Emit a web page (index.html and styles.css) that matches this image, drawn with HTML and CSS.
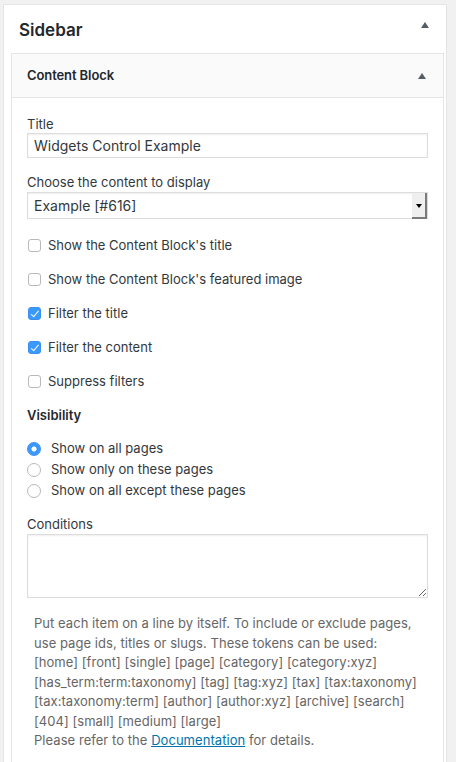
FILE: index.html
```html
<!DOCTYPE html>
<html lang="en">
<head>
<meta charset="utf-8">
<title>Sidebar widget</title>
<link rel="stylesheet" href="styles.css">
</head>
<body>
<div class="sidebar">
  <div class="sidebar-head">
    <h2 class="sidebar-name">Sidebar</h2>
    <span class="toggle-arrow"></span>
  </div>
  <div class="widget">
    <div class="widget-top">
      <h3 class="widget-title">Content Block</h3>
      <span class="toggle-arrow"></span>
    </div>
    <div class="widget-inside">
      <div class="field">
        <label class="field-label" for="w-title">Title</label>
        <input class="text-input" id="w-title" type="text" value="Widgets Control Example">
      </div>
      <div class="field">
        <label class="field-label" for="w-content">Choose the content to display</label>
        <div class="select-wrap">
          <select class="select-input" id="w-content">
            <option>Example [#616]</option>
          </select>
          <span class="select-btn"></span>
        </div>
      </div>
      <div class="checks">
        <label class="check-row"><input class="check" type="checkbox"><span>Show the Content Block's title</span></label>
        <label class="check-row"><input class="check" type="checkbox"><span>Show the Content Block's featured image</span></label>
        <label class="check-row"><input class="check" type="checkbox" checked><span>Filter the title</span></label>
        <label class="check-row"><input class="check" type="checkbox" checked><span>Filter the content</span></label>
        <label class="check-row"><input class="check" type="checkbox"><span>Suppress filters</span></label>
      </div>
      <div class="section-title">Visibility</div>
      <div class="radios">
        <label class="radio-row"><input class="radio" type="radio" name="vis" checked><span>Show on all pages</span></label>
        <label class="radio-row"><input class="radio" type="radio" name="vis"><span>Show only on these pages</span></label>
        <label class="radio-row"><input class="radio" type="radio" name="vis"><span>Show on all except these pages</span></label>
      </div>
      <div class="field conditions">
        <label class="field-label" for="w-cond">Conditions</label>
        <textarea class="text-area" id="w-cond"></textarea>
      </div>
      <p class="help">Put each item on a line by itself. To include or exclude pages,<br>use page ids, titles or slugs. These tokens can be used:<br>[home] [front] [single] [page] [category] [category:xyz]<br>[has_term:term:taxonomy] [tag] [tag:xyz] [tax] [tax:taxonomy]<br>[tax:taxonomy:term] [author] [author:xyz] [archive] [search]<br>[404] [small] [medium] [large]<br>Please refer to the <a class="doc-link" href="#">Documentation</a> for details.</p>
    </div>
  </div>
</div>
</body>
</html>
```
FILE: styles.css
```css
* { box-sizing: border-box; }
html, body { margin: 0; padding: 0; }
body {
  background: #f1f1f1;
  font-family: "Inter", "Liberation Sans", sans-serif;
  font-size: 13px;
  color: #23282d;
  overflow: hidden;
  height: 762px;
}
.sidebar {
  margin: 4px 9px 0 3px;
  background: #fff;
  border: 1px solid #e5e5e5;
  border-bottom: 0;
}
.sidebar-head {
  display: flex;
  justify-content: space-between;
  align-items: flex-start;
  padding: 12px 17px 10px 15px;
}
.sidebar-name {
  margin: 0;
  font-size: 17px;
  font-weight: 600;
  line-height: 26px;
}
.toggle-arrow {
  width: 0;
  height: 0;
  border-left: 4px solid transparent;
  border-right: 4px solid transparent;
  border-bottom: 6px solid #555d66;
}
.sidebar-head .toggle-arrow { margin-top: 5px; }
.widget {
  margin: 0 2px 0 7px;
  border: 1px solid #e5e5e5;
  border-bottom: 0;
  background: #fff;
}
.widget-top {
  display: flex;
  justify-content: space-between;
  align-items: center;
  height: 44px;
  padding: 0 17px 0 15px;
  background: #fafafa;
  border-bottom: 1px solid #e5e5e5;
}
.widget-title {
  margin: 0;
  font-size: 13px;
  font-weight: 600;
  line-height: 43px;
  letter-spacing: -0.1px;
}
.widget-inside {
  padding: 18px 15px 40px;
}
.field { margin: 0 0 16px; }
.field-label {
  display: block;
  line-height: 17px;
  color: #32373c;
}
.text-input, .select-input, .text-area {
  display: block;
  width: 100%;
  margin: 0;
  border: 1px solid #ddd;
  box-shadow: inset 0 1px 2px rgba(0,0,0,.07);
  background: #fff;
  color: #32373c;
  font-family: inherit;
  outline: none;
  border-radius: 0;
}
.text-input {
  height: 25px;
  padding: 0 6px;
  font-size: 14px;
}
.select-wrap {
  position: relative;
  margin-top: 1px;
}
.select-input {
  -webkit-appearance: none;
  appearance: none;
  height: 27px;
  padding: 0 6px;
  font-size: 14px;
}
.select-btn {
  position: absolute;
  top: 1px;
  right: 1px;
  bottom: 0;
  width: 15px;
  background: #efefef;
  box-shadow: inset -2px -2px 0 #7b7b7b;
  pointer-events: none;
}
.select-btn::after {
  content: "";
  position: absolute;
  left: 4px;
  top: 11px;
  border-left: 3.5px solid transparent;
  border-right: 3.5px solid transparent;
  border-top: 4px solid #000;
}
.checks {
  display: flex;
  flex-direction: column;
  gap: 14px;
}
.check-row, .radio-row {
  display: flex;
  align-items: center;
  line-height: 20px;
  color: #32373c;
}
.check {
  -webkit-appearance: none;
  appearance: none;
  position: relative;
  width: 13px;
  height: 13px;
  margin: 0 7px 0 1px;
  border: 1px solid #b9b9b9;
  border-radius: 3px;
  background: #fff;
  flex: none;
}
.check:checked {
  background: #3b99fc;
  border-color: #3b8ff0;
}
.check:checked::after {
  content: "";
  position: absolute;
  left: 3.5px;
  top: 1px;
  width: 3px;
  height: 6.5px;
  border-right: 1.6px solid #fff;
  border-bottom: 1.6px solid #fff;
  transform: rotate(40deg);
}
.section-title {
  margin-top: 14px;
  font-weight: 600;
  line-height: 20px;
}
.radios {
  margin-top: 13px;
  display: flex;
  flex-direction: column;
}
.radio-row { line-height: 21px; }
.radio {
  -webkit-appearance: none;
  appearance: none;
  width: 14px;
  height: 14px;
  margin: 0 9px 0 0;
  border: 1px solid #b9b9b9;
  border-radius: 50%;
  background: #fff;
  flex: none;
}
.radio:checked {
  border-color: #3b8ff0;
  background: radial-gradient(circle, #fff 0 2.2px, #3b99fc 2.9px);
}
.radio-row span { margin-left: 1px; }
.conditions { margin-top: 15px; }
.text-area {
  height: 64px;
  margin-top: 1px;
  resize: both;
}
.help {
  margin: 16px 0 0 7px;
  line-height: 19.5px;
  letter-spacing: 0.05px;
  white-space: nowrap;
  color: #666;
}
.doc-link {
  color: #0073aa;
  text-decoration: underline;
}
```
